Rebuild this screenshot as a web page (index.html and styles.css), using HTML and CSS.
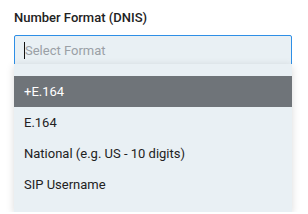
FILE: index.html
```html
<!DOCTYPE html>
<html lang="en">
<head>
    <meta charset="UTF-8">
    <title>Number Format</title>
    <link rel="stylesheet" href="styles.css">
</head>
<body>

<div class="field">
    <label class="field-label">Number Format (DNIS)</label>
    <div class="select-wrap">
        <div class="select-input"><span class="caret"></span><span class="placeholder">Select Format</span></div>
        <ul class="select-menu">
            <li class="active">+E.164</li>
            <li>E.164</li>
            <li>National (e.g. US - 10 digits)</li>
            <li>SIP Username</li>
        </ul>
    </div>
</div>

</body>
</html>
```

FILE: styles.css
```css
body {
    font-family: Roboto, sans-serif;
    background: #ffffff;
    margin: 0;
    padding: 0;
    color: #222;
}

.field {
    padding: 9px 16px 0 14px;
}

.field-label {
    display: block;
    font-size: 13px;
    font-weight: 500;
    color: #222;
    line-height: 18px;
    margin-bottom: 8px;
}

.select-input {
    box-sizing: border-box;
    height: 31px;
    background: #e9f0f4;
    border: 1px solid #2e8fe6;
    border-radius: 2px;
    display: flex;
    align-items: center;
    padding-left: 9px;
    font-size: 13px;
}
.caret {
    width: 1px;
    height: 17px;
    background: #111;
}
.placeholder {
    color: #9aa0a6;
}

.select-menu {
    position: relative;
    margin: -2px 0 0;
    padding: 12px 0 12px;
    list-style: none;
    background: #e9f0f4;
    box-shadow: 0px 2px 8px rgba(0, 0, 0, 0.15);
}
.select-menu li {
    height: 31px;
    line-height: 31px;
    padding-left: 10px;
    font-size: 13px;
    color: #222;
}
.select-menu li.active {
    background: #6f7479;
    color: #fff;
}
```
